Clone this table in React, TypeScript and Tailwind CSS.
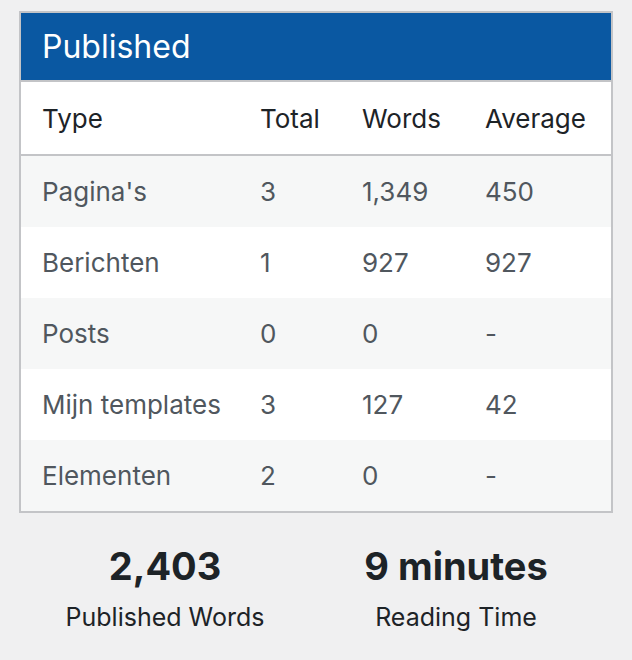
const rows = [
  { type: "Pagina's", total: "3", words: "1,349", average: "450" },
  { type: "Berichten", total: "1", words: "927", average: "927" },
  { type: "Posts", total: "0", words: "0", average: "-" },
  { type: "Mijn templates", total: "3", words: "127", average: "42" },
  { type: "Elementen", total: "2", words: "0", average: "-" },
];

const cols = "grid grid-cols-[219px_102px_123px_1fr]";

export default function App() {
  return (
    <div
      className="min-h-[660px] w-[632px] bg-[#f0f0f1] px-[19px] pt-[11px]"
      style={{ fontFamily: "Inter, 'Noto Sans', sans-serif" }}
    >
      <div className="border-2 border-[#c3c4c7] bg-white">
        <div className="flex h-[69px] items-center border-b-2 border-[#c3c4c7] bg-[#0a58a2] px-[21px] text-[32px] text-white">
          Published
        </div>
        <div className={`${cols} h-[74px] items-center border-b-2 border-[#c3c4c7] text-[26px] text-[#1d2327]`}>
          <div className="pl-[21px]">Type</div>
          <div className="pl-5">Total</div>
          <div className="pl-5">Words</div>
          <div className="pl-5">Average</div>
        </div>
        {rows.map((r, i) => (
          <div
            key={r.type}
            className={`${cols} h-[71px] items-center text-[26px] text-[#50575e] ${
              i % 2 === 0 ? "bg-[#f6f7f7]" : "bg-white"
            }`}
          >
            <div className="pl-[21px]">{r.type}</div>
            <div className="pl-5">{r.total}</div>
            <div className="pl-5">{r.words}</div>
            <div className="pl-5">{r.average}</div>
          </div>
        ))}
      </div>
      <div className="flex pt-[31px] text-center text-[#1d2327]">
        <div className="w-[292px]">
          <div className="text-[38px] font-bold leading-[44px]">2,403</div>
          <div className="mt-[14px] text-[25px] leading-[30px]">Published Words</div>
        </div>
        <div className="w-[290px]">
          <div className="text-[38px] font-bold leading-[44px]">9 minutes</div>
          <div className="mt-[14px] text-[25px] leading-[30px]">Reading Time</div>
        </div>
      </div>
    </div>
  );
}
